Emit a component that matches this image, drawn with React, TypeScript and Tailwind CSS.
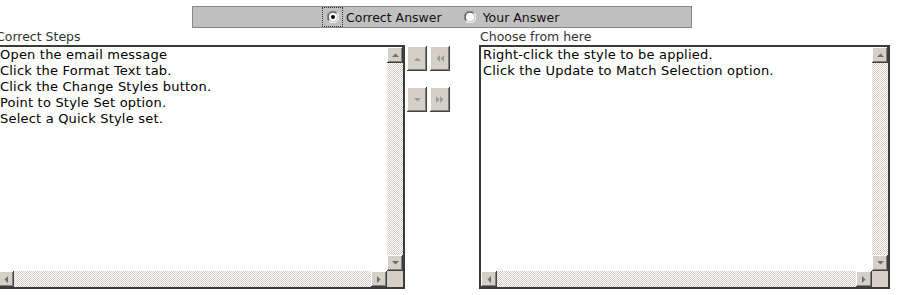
import React from "react";

const face = "bg-[#d4d0c8]";
const bevel =
  "shadow-[inset_-1px_-1px_#404040,inset_1px_1px_#ffffff,inset_-2px_-2px_#808080,inset_2px_2px_#d4d0c8]";

function Tri({ dir, color = "#6d6d6d" }: { dir: "up" | "down" | "left" | "right"; color?: string }) {
  const pts: Record<string, string> = {
    up: "0,4 7,4 3.5,0.5",
    down: "0,0 7,0 3.5,3.5",
    left: "4,0 4,7 0.5,3.5",
    right: "0,0 0,7 3.5,3.5",
  };
  const vertical = dir === "up" || dir === "down";
  return (
    <svg width={vertical ? 7 : 4} height={vertical ? 4 : 7} viewBox={vertical ? "0 0 7 4" : "0 0 4 7"}>
      <polygon points={pts[dir]} fill={color} />
    </svg>
  );
}

function SBtn({ dir }: { dir: "up" | "down" | "left" | "right" }) {
  return (
    <div className={`w-[16px] h-[16px] shrink-0 flex items-center justify-center ${face} ${bevel}`}>
      <Tri dir={dir} />
    </div>
  );
}

const track =
  "bg-[repeating-conic-gradient(#d4d0c8_0%_25%,#ffffff_0%_50%)] bg-[length:2px_2px]";

function ListBox({ lines, width }: { lines: string[]; width: string }) {
  return (
    <div className={`${width} h-[244px] border-2 border-[#3a3a3a] bg-white flex flex-col`}>
      <div className="flex flex-1 min-h-0">
        <div className="flex-1 pl-[2px] leading-[16px] text-[13px] tracking-[0.2px] text-black whitespace-nowrap overflow-hidden">
          {lines.map((l) => (
            <div key={l}>{l}</div>
          ))}
        </div>
        <div className="w-[16px] flex flex-col">
          <SBtn dir="up" />
          <div className={`flex-1 ${track}`} />
          <SBtn dir="down" />
        </div>
      </div>
      <div className="h-[16px] flex">
        <SBtn dir="left" />
        <div className={`flex-1 ${track}`} />
        <SBtn dir="right" />
        <div className={`w-[16px] h-[16px] ${face}`} />
      </div>
    </div>
  );
}

function Radio({ checked }: { checked: boolean }) {
  return (
    <svg width="12" height="12" viewBox="0 0 12 12">
      <path d="M10.2 1.8 A5.9 5.9 0 0 0 1.8 10.2" stroke="#808080" fill="none" strokeWidth="1" />
      <path d="M1.8 10.2 A5.9 5.9 0 0 0 10.2 1.8" stroke="#ffffff" fill="none" strokeWidth="1" />
      <path d="M9.4 2.6 A4.8 4.8 0 0 0 2.6 9.4" stroke="#404040" fill="none" strokeWidth="1" />
      <path d="M2.6 9.4 A4.8 4.8 0 0 0 9.4 2.6" stroke="#d4d0c8" fill="none" strokeWidth="1" />
      <circle cx="6" cy="6" r="4.2" fill="#ffffff" />
      {checked && <circle cx="6" cy="6" r="2" fill="#000000" />}
    </svg>
  );
}

function MidBtn({ children }: { children: React.ReactNode }) {
  return (
    <div className={`w-[20px] h-[25px] flex items-center justify-center ${face} ${bevel}`}>{children}</div>
  );
}

function Group({ children }: { children: React.ReactNode }) {
  return <div className="flex items-center">{children}</div>;
}

export default function App() {
  return (
    <div className="w-[904px] h-[295px] bg-white overflow-hidden font-['DejaVu_Sans','Verdana',sans-serif] text-[12.5px] text-[#222]">
      <div className="pt-[6px] pl-[192px]">
        <div className="w-[500px] h-[22px] bg-[#c0c0c0] border border-[#888888] flex items-center">
          <div className="ml-[129px] w-[21px] h-[20px] border border-dotted border-[#333] flex items-center justify-center">
            <Radio checked />
          </div>
          <span className="ml-[3px] text-[#111] leading-[20px] pt-[1px]">Correct Answer</span>
          <div className="ml-[22px]">
            <Radio checked={false} />
          </div>
          <span className="ml-[7px] text-[#111] leading-[20px] pt-[1px]">Your Answer</span>
        </div>
      </div>
      <div className="flex -ml-[4px]">
        <div className="w-[409px]">
          <div className="h-[17px] leading-[17px] text-[#333]">Correct Steps</div>
          <ListBox
            width="w-[409px]"
            lines={[
              "Open the email message",
              "Click the Format Text tab.",
              "Click the Change Styles button.",
              "Point to Style Set option.",
              "Select a Quick Style set.",
            ]}
          />
        </div>
        <div className="w-[74px] pt-[18px] pl-[2px] flex flex-col gap-[16px]">
          <div className="flex gap-[3px]">
            <MidBtn>
              <Group>
                <Tri dir="up" color="#9a9a9a" />
              </Group>
            </MidBtn>
            <MidBtn>
              <Group>
                <Tri dir="left" color="#9a9a9a" />
                <Tri dir="left" color="#9a9a9a" />
              </Group>
            </MidBtn>
          </div>
          <div className="flex gap-[3px]">
            <MidBtn>
              <Group>
                <Tri dir="down" color="#9a9a9a" />
              </Group>
            </MidBtn>
            <MidBtn>
              <Group>
                <Tri dir="right" color="#9a9a9a" />
                <Tri dir="right" color="#9a9a9a" />
              </Group>
            </MidBtn>
          </div>
        </div>
        <div className="w-[411px]">
          <div className="h-[17px] leading-[17px] pl-[1px] text-[#333]">Choose from here</div>
          <ListBox
            width="w-[411px]"
            lines={["Right-click the style to be applied.", "Click the Update to Match Selection option."]}
          />
        </div>
      </div>
    </div>
  );
}
